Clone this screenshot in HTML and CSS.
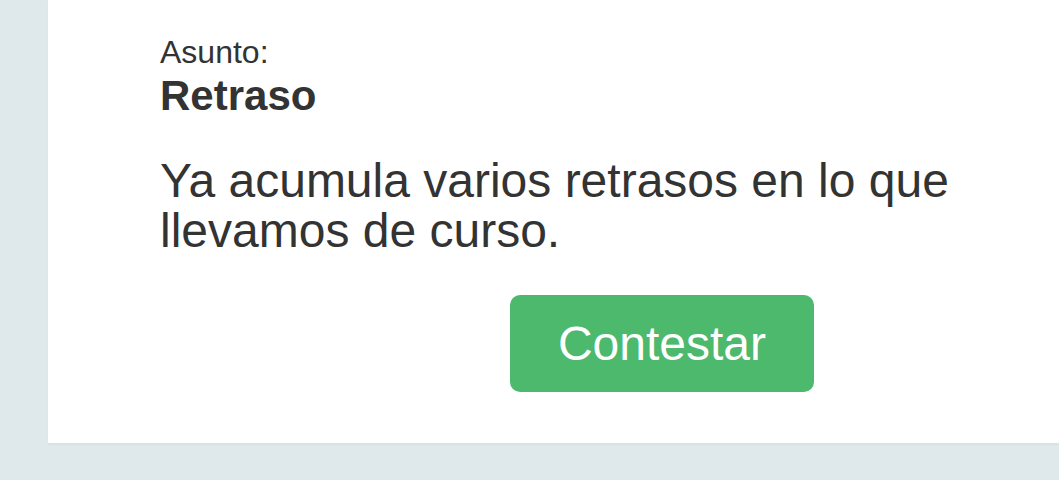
FILE: index.html
```html
<!DOCTYPE html>
<html lang="es">
<head>
<meta charset="utf-8">
<title>Mensaje</title>
<link rel="stylesheet" href="styles.css">
</head>
<body>
<main class="page">
  <section class="card">
    <div class="label">Asunto:</div>
    <div class="subject">Retraso</div>
    <p class="message">Ya acumula varios retrasos en lo que llevamos de curso.</p>
    <button class="reply" type="button">Contestar</button>
  </section>
</main>
</body>
</html>
```
FILE: styles.css
```css
html, body {
  margin: 0;
  padding: 0;
  background: #dfe9eb;
  font-family: "Liberation Sans", Arial, sans-serif;
  color: #333333;
}
.page {
  display: flex;
  height: 480px;
  overflow: hidden;
}
.card {
  margin-left: 48px;
  flex: 1;
  height: 443px;
  background: #ffffff;
  box-shadow: 0 2px 2px rgba(0, 0, 0, 0.03);
  box-sizing: border-box;
  padding: 33px 0 0 112px;
  display: flex;
  flex-direction: column;
  align-items: flex-start;
}
.label {
  font-size: 32px;
  line-height: 38px;
}
.subject {
  font-size: 42px;
  line-height: 50px;
  font-weight: bold;
}
.message {
  margin: 35px 0 0 0;
  font-size: 48px;
  line-height: 50px;
  width: 820px;
}
.reply {
  margin: 39px 0 0 350px;
  width: 304px;
  height: 97px;
  border: none;
  border-radius: 10px;
  background: #4cb96d;
  color: #ffffff;
  font-family: "Liberation Sans", Arial, sans-serif;
  font-size: 48px;
  line-height: 97px;
  padding: 0;
}
```
